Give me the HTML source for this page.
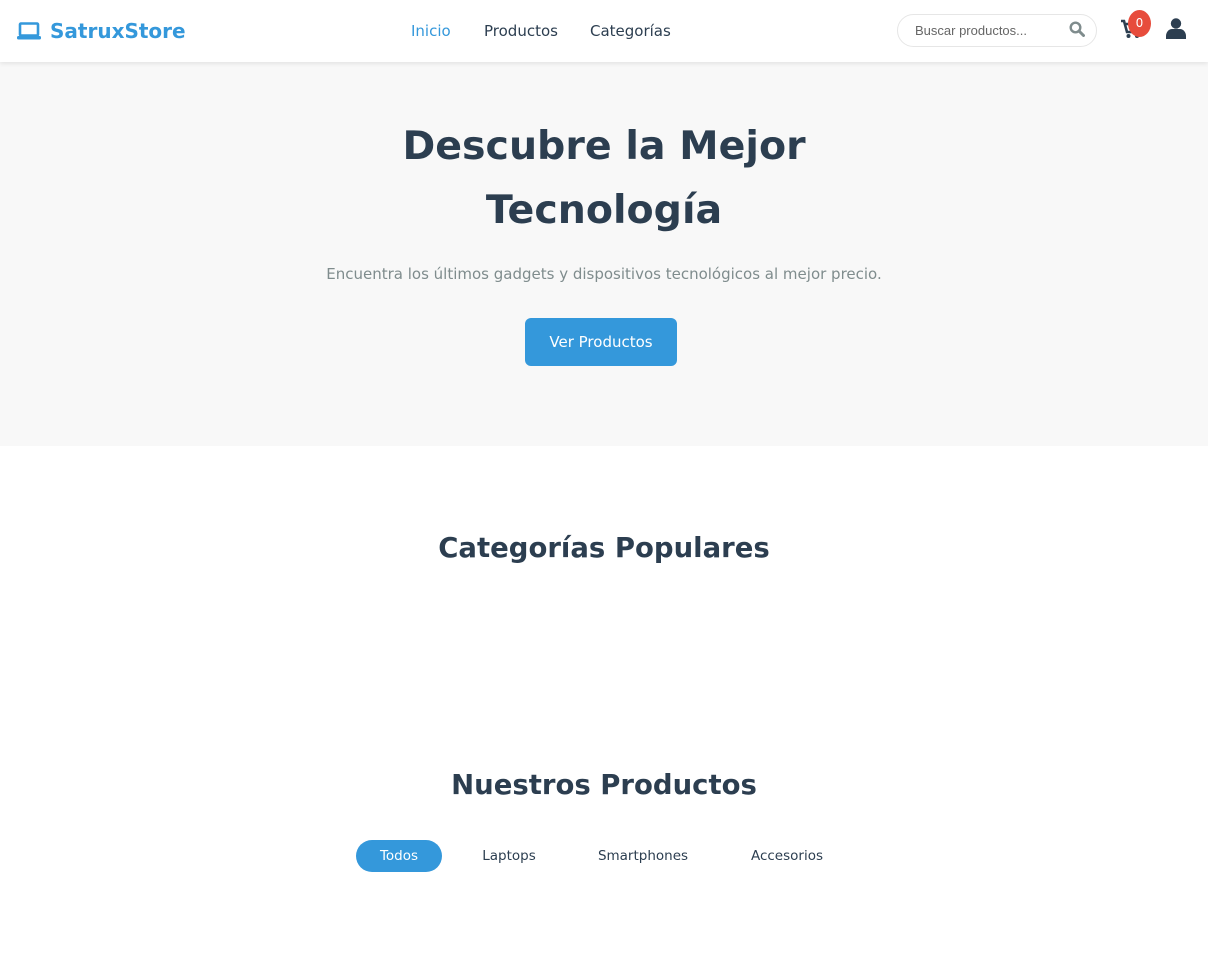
<!DOCTYPE html>
<html><head><meta charset="utf-8"><style>
*{margin:0;padding:0;box-sizing:border-box}
body{width:1208px;height:953px;background:#fff;font-family:"DejaVu Sans",sans-serif;color:#2c3e50;overflow:hidden;position:relative}
.hdr{position:absolute;top:0;left:0;width:1208px;height:62px;background:#fff;box-shadow:0 2px 4px rgba(0,0,0,0.08);z-index:2}
.logo{position:absolute;left:17px;top:19px;font-weight:bold;font-size:20px;color:#3498db;display:flex;align-items:center}
.logo svg{margin-right:9px}
.nav a{position:absolute;top:22px;font-size:15px;color:#2c3e50;text-decoration:none}
.search{position:absolute;left:897px;top:14px;width:200px;height:33px;border:1px solid #e6e6e6;border-radius:17px;font-family:"Liberation Sans",sans-serif;font-size:13px;color:#666;padding:8px 0 0 17px}
.hero{position:absolute;top:62px;left:0;width:1208px;height:384px;background:#f8f8f8;text-align:center}
h1{position:absolute;top:52px;width:100%;font-size:39.5px;line-height:64px;font-weight:bold}
.sub{position:absolute;top:203px;width:100%;font-size:15px;color:#7f8c8d}
.btn{position:absolute;left:525px;top:256px;width:152px;height:48px;background:#3498db;border-radius:6px;color:#fff;font-size:15px;line-height:48px}
h2{position:absolute;width:100%;text-align:center;font-size:27.5px;font-weight:bold}
.f{position:absolute;top:840px;height:32px;line-height:33px;font-size:13.5px;color:#2c3e50;text-align:center}
</style></head><body>
<div class="hdr">
<div class="logo"><svg width="24" height="18" viewBox="0 0 24 18"><rect x="3" y="1.5" width="18" height="12" rx="1" fill="none" stroke="#3498db" stroke-width="2.6"/><rect x="0" y="14" width="24" height="3.5" rx="1.5" fill="#3498db"/></svg>SatruxStore</div>
<div class="nav"><a style="left:411px;color:#3498db">Inicio</a><a style="left:484px">Productos</a><a style="left:590px">Categorías</a></div>
<div class="search">Buscar productos...</div>
<svg style="position:absolute;left:1069px;top:21px" width="16" height="16" viewBox="0 0 16 16"><circle cx="6.5" cy="6.5" r="4.8" fill="none" stroke="#7f8c8d" stroke-width="2.4"/><line x1="10" y1="10" x2="14.5" y2="14.5" stroke="#7f8c8d" stroke-width="3" stroke-linecap="round"/></svg>
<svg style="position:absolute;left:1120px;top:19px" width="24" height="20" viewBox="0 0 24 20"><path d="M1 2h3l3 11h11l3-8H6" fill="none" stroke="#2c3e50" stroke-width="2.6"/><circle cx="8.5" cy="17" r="2" fill="#2c3e50"/><circle cx="17" cy="17" r="2" fill="#2c3e50"/></svg>
<div style="position:absolute;left:1128px;top:10px;width:23px;height:27px;border-radius:50%;background:#e74c3c;color:#fff;font-size:12px;text-align:center;line-height:27px">0</div>
<svg style="position:absolute;left:1166px;top:18px" width="20" height="21" viewBox="0 0 20 21"><circle cx="10" cy="5.5" r="5.2" fill="#2c3e50"/><path d="M0 21v-3c0-4 3-7 6-7h8c3 0 6 3 6 7v3z" fill="#2c3e50"/></svg>
</div>
<div class="hero">
<h1>Descubre la Mejor<br>Tecnología</h1>
<div class="sub">Encuentra los últimos gadgets y dispositivos tecnológicos al mejor precio.</div>
<div class="btn">Ver Productos</div>
</div>
<h2 style="top:532px">Categorías Populares</h2>
<h2 style="top:769px">Nuestros Productos</h2>
<div class="f" style="left:356px;width:86px;background:#3498db;color:#fff;border-radius:16px">Todos</div>
<div class="f" style="left:470px;width:78px">Laptops</div>
<div class="f" style="left:590px;width:106px">Smartphones</div>
<div class="f" style="left:742px;width:90px">Accesorios</div>
</body></html>
